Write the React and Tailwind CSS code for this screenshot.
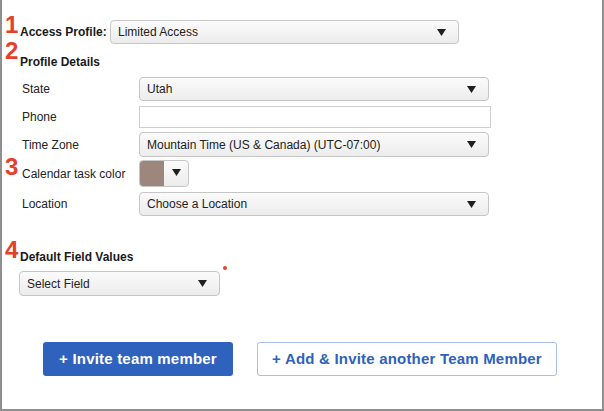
import React from 'react';

const Caret = () => (
  <svg width="9" height="7" viewBox="0 0 9 7" className="shrink-0">
    <path d="M0 0h9L4.5 7z" fill="#1f1f1f" />
  </svg>
);

const Select = ({ value, className = '' }) => (
  <div
    className={`flex items-center justify-between h-[24px] pl-[7px] pr-[12px] rounded-[4px] border border-[#c6c6c6] bg-gradient-to-b from-[#fbfbfb] to-[#ececec] text-[12px] text-[#222] ${className}`}
  >
    <span>{value}</span>
    <Caret />
  </div>
);

const Step = ({ n, top }) => (
  <span className={`absolute left-[3px] ${top} text-[24px] leading-none font-bold text-[#e6402b]`}>{n}</span>
);

const Row = ({ label, children, className = '' }) => (
  <div className={`flex items-center ${className}`}>
    <span className="w-[117px] text-[12px] text-[#222]">{label}</span>
    {children}
  </div>
);

export default function App() {
  return (
    <div
      className="relative w-[604px] h-[411px] bg-white border-l-2 border-r-2 border-b-2 border-[#8f8f8f] overflow-hidden"
      style={{ fontFamily: '"Liberation Sans", Arial, sans-serif' }}
    >
      <Step n="1" top="top-[13px]" />
      <Step n="2" top="top-[39px]" />
      <Step n="3" top="top-[155px]" />
      <Step n="4" top="top-[238px]" />

      <div className="flex flex-col pl-[18px] pt-[20px]">
        {/* Access profile */}
        <div className="flex items-center">
          <span className="w-[90px] text-[12px] font-bold text-[#1a1a1a]">Access Profile:</span>
          <Select value="Limited Access" className="w-[349px]" />
        </div>

        <div className="mt-[10px] h-[16px] flex items-center text-[12px] font-bold text-[#1a1a1a]">Profile Details</div>

        {/* Profile detail rows */}
        <div className="flex flex-col pl-[2px] mt-[7px]">
          <Row label="State">
            <Select value="Utah" className="w-[350px]" />
          </Row>
          <Row label="Phone" className="mt-[5px]">
            <div className="w-[352px] h-[22px] border border-[#cfcfcf] bg-white" />
          </Row>
          <Row label="Time Zone" className="mt-[4px]">
            <Select value="Mountain Time (US & Canada) (UTC-07:00)" className="w-[350px] h-[25px]" />
          </Row>
          <Row label="Calendar task color" className="mt-[3px]">
            <div className="flex w-[50px] h-[27px] rounded-[4px] border border-[#c6c6c6] overflow-hidden bg-gradient-to-b from-[#fbfbfb] to-[#ececec]">
              <div className="w-[24px] bg-[#9d877c]" />
              <div className="flex-1 flex justify-center pt-[8px]">
                <Caret />
              </div>
            </div>
          </Row>
          <Row label="Location" className="mt-[5px]">
            <Select value="Choose a Location" className="w-[350px]" />
          </Row>
        </div>

        {/* Default field values */}
        <div className="mt-[33px] h-[16px] flex items-center text-[12px] font-bold text-[#1a1a1a]">Default Field Values</div>
        <div className="relative mt-[6px] -ml-[1px] w-[201px]">
          <Select value="Select Field" className="w-[201px] h-[25px]" />
          <span className="absolute -right-[7px] -top-[5px] w-[4px] h-[4px] rounded-full bg-[#e6402b]" />
        </div>

        {/* Actions */}
        <div className="flex gap-[24px] pl-[23px] mt-[46px]">
          <button className="w-[190px] h-[34px] rounded-[3px] bg-[#2e62bc] text-white text-[15px] font-bold tracking-[0.2px]">
            + Invite team member
          </button>
          <button className="w-[300px] h-[34px] rounded-[3px] border border-[#a8bfe6] bg-white text-[#2e62bc] text-[15px] font-bold tracking-[0.2px]">
            + Add &amp; Invite another Team Member
          </button>
        </div>
      </div>
    </div>
  );
}
